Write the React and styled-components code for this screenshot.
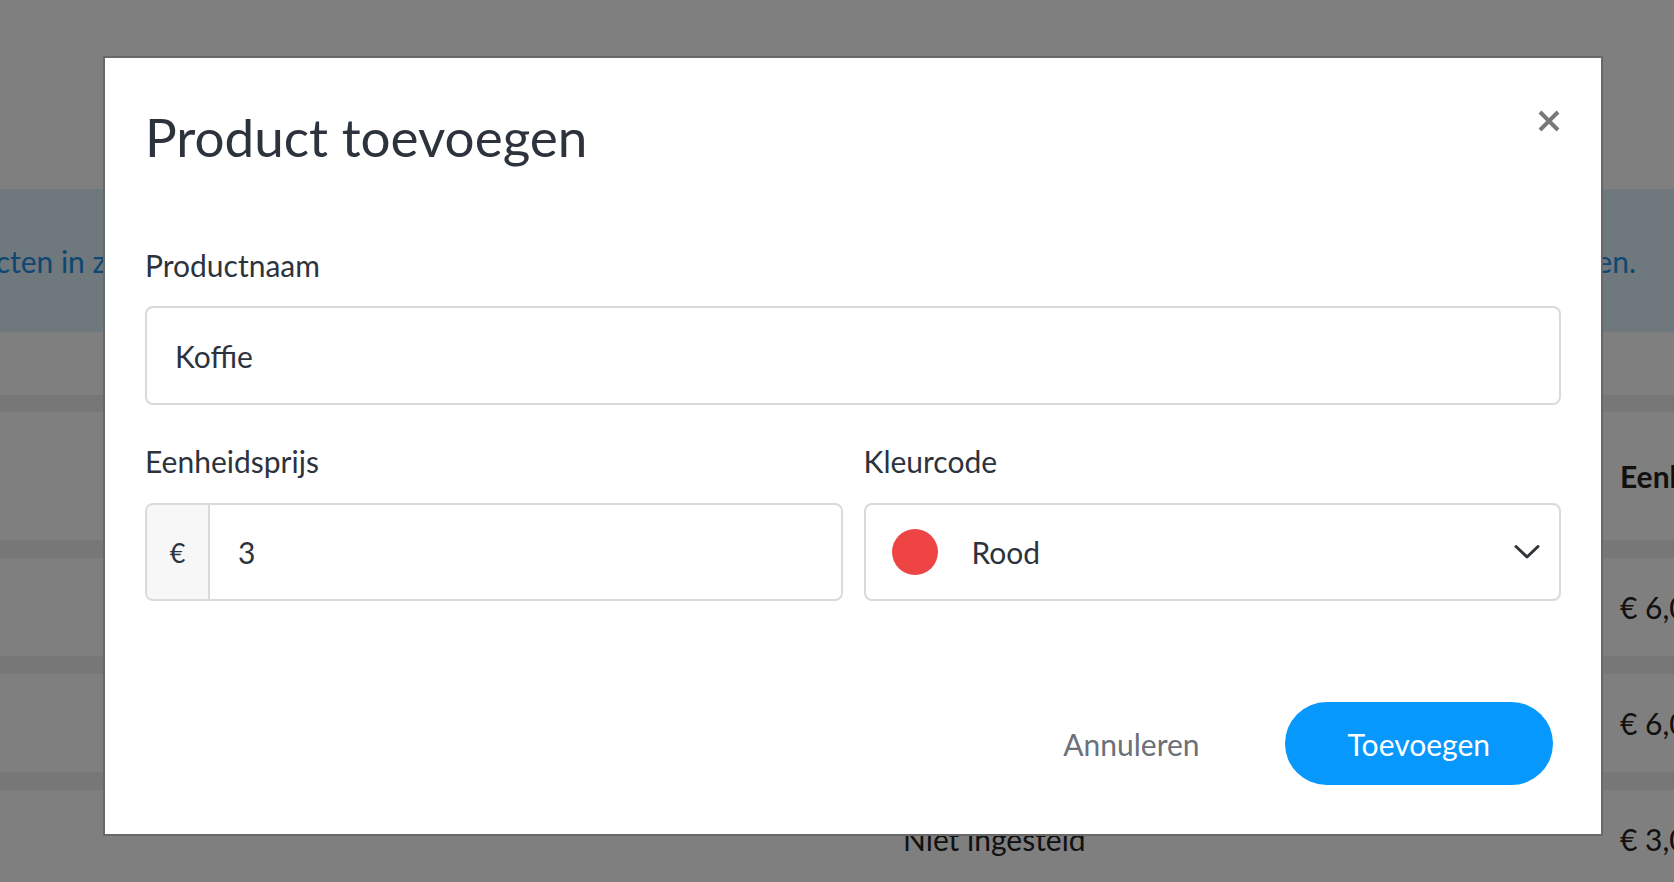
import React from 'react';
import styled, { createGlobalStyle } from 'styled-components';

const GlobalStyle = createGlobalStyle`
    html, body {
        margin: 0;
        padding: 0;
        background: #ffffff;
        font-family: Lato, "Open Sans", Arial, sans-serif;
        color: #2c333d;
    }
    * {
        box-sizing: border-box;
    }
`;

// ---- page behind the dialog ----

const Page = styled.div`
    height: 100vh;
    overflow: hidden;
    background: #ffffff;
    display: flex;
    flex-direction: column;
`;

const TopSpace = styled.div`
    height: 189px;
    flex-shrink: 0;
`;

const InfoBanner = styled.div`
    height: 143px;
    flex-shrink: 0;
    background: #def0f8;
    color: #1c8ee6;
    font-size: 30px;
    display: flex;
    align-items: center;
    justify-content: space-between;
    white-space: nowrap;
    overflow: hidden;
    padding-right: 38px;
`;

const BannerText = styled.span`
    margin-left: ${props => props.offset || 0}px;
`;

const Table = styled.div`
    margin-top: 63px;
    padding-top: 17px;
    background: #efefef;
    display: flex;
    flex-direction: column;
    gap: 18px;
`;

const Row = styled.div`
    background: #ffffff;
    height: ${props => (props.header ? 128 : 98)}px;
    display: grid;
    grid-template-columns: 717px 1fr;
    align-items: center;
    padding-left: 903px;
    font-size: 30px;
    font-weight: ${props => (props.header ? 700 : 400)};
    color: #222;
    white-space: nowrap;
    overflow: hidden;
`;

// ---- dialog ----

const Backdrop = styled.div`
    position: fixed;
    inset: 0;
    background: rgba(0, 0, 0, 0.5);
    padding: 56px 0 0 103px;
`;

const Dialog = styled.div`
    width: 1500px;
    height: 780px;
    background: #ffffff;
    border: 2px solid #686868;
    padding: 47px 40px 49px 40px;
    display: flex;
    flex-direction: column;
`;

const Header = styled.div`
    display: flex;
    justify-content: space-between;
    align-items: flex-start;
    margin-bottom: 78px;
`;

const Title = styled.h2`
    margin: 0;
    font-size: 53px;
    line-height: 64px;
    font-weight: 400;
    color: #2c333d;
`;

const CloseButton = styled.button`
    border: none;
    background: none;
    padding: 0;
    margin: 5px 1px 0 0;
    width: 22px;
    height: 22px;
    cursor: pointer;
    display: flex;
`;

const Field = styled.div`
    display: flex;
    flex-direction: column;
    gap: ${props => props.gap || 23}px;
`;

const Label = styled.label`
    font-size: 30px;
    line-height: 36px;
    color: #2c333d;
`;

const InputBox = styled.div`
    height: ${props => props.height || 98}px;
    border: 2px solid #dadada;
    border-radius: 8px;
    display: flex;
    align-items: stretch;
    overflow: hidden;
    background: #ffffff;
`;

const TextInput = styled.input`
    flex: 1;
    min-width: 0;
    border: none;
    outline: none;
    padding: 0 28px;
    font-family: inherit;
    font-size: 30px;
    color: #2c333d;
    background: transparent;
`;

const Addon = styled.span`
    width: 63px;
    flex-shrink: 0;
    background: #f7f7f7;
    border-right: 2px solid #dadada;
    display: flex;
    align-items: center;
    justify-content: center;
    font-size: 27px;
    color: #2c333d;
`;

const TwoColumns = styled.div`
    display: grid;
    grid-template-columns: 1fr 1fr;
    gap: 21px;
    margin-top: 38px;
`;

const SelectBox = styled(InputBox)`
    align-items: center;
    padding: 0 19px 0 26px;
    cursor: pointer;
`;

const Swatch = styled.span`
    width: 46px;
    height: 46px;
    border-radius: 50%;
    background: ${props => props.color};
    flex-shrink: 0;
    margin-right: 34px;
`;

const SelectValue = styled.span`
    flex: 1;
    font-size: 30px;
    color: #2c333d;
`;

const Footer = styled.div`
    margin-top: auto;
    display: flex;
    justify-content: flex-end;
    align-items: center;
    gap: 85px;
    padding-right: 8px;
`;

const Button = styled.button`
    height: 83px;
    border: none;
    border-radius: 42px;
    font-family: inherit;
    font-size: 30px;
    cursor: pointer;
    padding: ${props => (props.primary ? '0 63px' : '0')};
    background: ${props => (props.primary ? '#0798fd' : 'transparent')};
    color: ${props => (props.primary ? '#ffffff' : '#6b7079')};
`;

const CloseIcon = () => (
    <svg width="22" height="22" viewBox="0 0 22 22">
        <path d="M2 2 L20 20 M20 2 L2 20" stroke="#787878" strokeWidth="4" />
    </svg>
);

const Chevron = () => (
    <svg width="26" height="16" viewBox="0 0 26 16">
        <polyline
            points="2,2.5 13,13 24,2.5"
            fill="none"
            stroke="#2f343b"
            strokeWidth="3"
            strokeLinecap="round"
            strokeLinejoin="round"
        />
    </svg>
);

const products = [
    { id: 1, color: 'Blauw', price: '€ 6,00' },
    { id: 2, color: 'Groen', price: '€ 6,00' },
    { id: 3, color: 'Niet ingesteld', price: '€ 3,00' },
];

const App = () => (
    <>
        <GlobalStyle />
        <Page>
            <TopSpace />
            <InfoBanner>
                <BannerText offset={-82}>producten in zowel de kassa als de webshop</BannerText>
                <BannerText>om ze snel terug te vinden.</BannerText>
            </InfoBanner>
            <Table>
                <Row header>
                    <span>Kleurcode</span>
                    <span>Eenheidsprijs</span>
                </Row>
                {products.map(p => (
                    <Row key={p.id}>
                        <span>{p.color}</span>
                        <span>{p.price}</span>
                    </Row>
                ))}
            </Table>
        </Page>

        <Backdrop>
            <Dialog>
                <Header>
                    <Title>Product toevoegen</Title>
                    <CloseButton aria-label="Sluiten">
                        <CloseIcon />
                    </CloseButton>
                </Header>

                <Field>
                    <Label>Productnaam</Label>
                    <InputBox height={99}>
                        <TextInput defaultValue="Koffie" />
                    </InputBox>
                </Field>

                <TwoColumns>
                    <Field gap={24}>
                        <Label>Eenheidsprijs</Label>
                        <InputBox>
                            <Addon>€</Addon>
                            <TextInput defaultValue="3" />
                        </InputBox>
                    </Field>
                    <Field gap={24}>
                        <Label>Kleurcode</Label>
                        <SelectBox>
                            <Swatch color="#ef4444" />
                            <SelectValue>Rood</SelectValue>
                            <Chevron />
                        </SelectBox>
                    </Field>
                </TwoColumns>

                <Footer>
                    <Button>Annuleren</Button>
                    <Button primary>Toevoegen</Button>
                </Footer>
            </Dialog>
        </Backdrop>
    </>
);

export default App;
